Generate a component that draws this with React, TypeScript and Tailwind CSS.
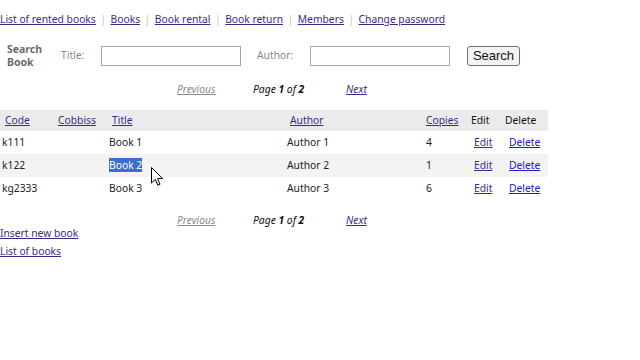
import React from "react";

const F = { fontFamily: '"Noto Sans", "DejaVu Sans", sans-serif' };

function Sep() {
  return <span className="text-[#c4c4c4] mx-[4.5px]">|</span>;
}

function Pager() {
  return (
    <div className="flex items-center text-[10.3px]">
      <div className="w-[177px]" />
      <div className="w-[76px]">
        <span className="italic underline text-[#8a8a8a]">Previous</span>
      </div>
      <div className="w-[93px] italic text-[#111]">
        Page <b>1</b> of <b>2</b>
      </div>
      <div>
        <span className="italic underline text-[#3b2a8c]">Next</span>
      </div>
    </div>
  );
}

const cols = "grid grid-cols-[55px_52px_178px_138px_47px_34px_44px]";

const rows = [
  { code: "k111", title: "Book 1", author: "Author 1", copies: "4" },
  { code: "k122", title: "Book 2", author: "Author 2", copies: "1" },
  { code: "kg2333", title: "Book 3", author: "Author 3", copies: "6" },
];

export default function App() {
  return (
    <div className="w-[640px] h-[360px] bg-white relative overflow-hidden text-[#222]" style={F}>
      <div className="h-[38px] pt-[1px] flex items-center text-[10.3px] text-[#3b2a8c]">
        <span className="underline">List of rented books</span>
        <Sep />
        <span className="underline">Books</span>
        <Sep />
        <span className="underline">Book rental</span>
        <Sep />
        <span className="underline">Book return</span>
        <Sep />
        <span className="underline">Members</span>
        <Sep />
        <span className="underline">Change password</span>
      </div>

      <div className="h-[36px] flex items-center text-[10.3px]">
        <div className="w-[61px] pl-[7px] font-bold text-[#6a6a6a] leading-[13px] text-[10.5px]">
          <div>Search</div>
          <div>Book</div>
        </div>
        <div className="w-[40px] text-[#888]">Title:</div>
        <div className="w-[140px] h-[20px] border border-[#a8a8a8] bg-white" />
        <div className="w-[16px]" />
        <div className="w-[53px] text-[#888]">Author:</div>
        <div className="w-[140px] h-[20px] border border-[#a8a8a8] bg-white" />
        <div className="w-[17px]" />
        <div className="w-[53px] h-[20px] border border-[#707070] rounded-[3px] bg-[#f4f4f4] flex items-center justify-center text-[13px] text-[#111]" style={{ fontFamily: '"Liberation Sans", Arial, sans-serif' }}>
          Search
        </div>
      </div>

      <div className="h-[31px] flex items-center">
        <Pager />
      </div>

      <div className="mt-[5px] w-[548px] text-[10.3px]">
        <div className={`${cols} h-[21px] items-center bg-[#ebebeb]`}>
          <div className="pl-[5px] underline text-[#3b2a8c]">Code</div>
          <div className="pl-[3px] underline text-[#3b2a8c]">Cobbiss</div>
          <div className="pl-[5px] underline text-[#3b2a8c]">Title</div>
          <div className="pl-[5px] underline text-[#3b2a8c]">Author</div>
          <div className="pl-[3px] underline text-[#3b2a8c]">Copies</div>
          <div className="pl-[1px] text-[#111]">Edit</div>
          <div className="pl-[1px] text-[#111]">Delete</div>
        </div>
        {rows.map((r, i) => (
          <div key={r.code} className={`${cols} h-[23px] items-center ${i === 1 ? "bg-[#f3f3f3]" : "bg-white"}`}>
            <div className="pl-[2px]">{r.code}</div>
            <div />
            <div className="pl-[2px]">
              {i === 1 ? (
                <span className="bg-[#3a6fd0] text-white">{r.title}</span>
              ) : (
                r.title
              )}
            </div>
            <div className="pl-[2px]">{r.author}</div>
            <div className="pl-[3px]">{r.copies}</div>
            <div className="pl-[4px] underline text-[#3b2a8c]">Edit</div>
            <div className="pl-[5px] underline text-[#2020c8]">Delete</div>
          </div>
        ))}
      </div>

      <div className="mt-[14px] h-[14px] flex items-center">
        <Pager />
      </div>
      <div className="h-[12px] flex items-center text-[10.3px] underline text-[#3b2a8c]">Insert new book</div>
      <div className="h-[24px] flex items-center text-[10.3px] underline text-[#3b2a8c]">List of books</div>

      <svg className="absolute left-[151px] top-[167px]" width="13" height="20" viewBox="0 0 13 20">
        <path d="M0.5 0.5 L0.5 16 L4.3 12.4 L6.8 18.3 L9 17.3 L6.6 11.6 L11.6 11.6 Z" fill="#fff" stroke="#000" strokeWidth="1" strokeLinejoin="round" />
      </svg>
    </div>
  );
}
